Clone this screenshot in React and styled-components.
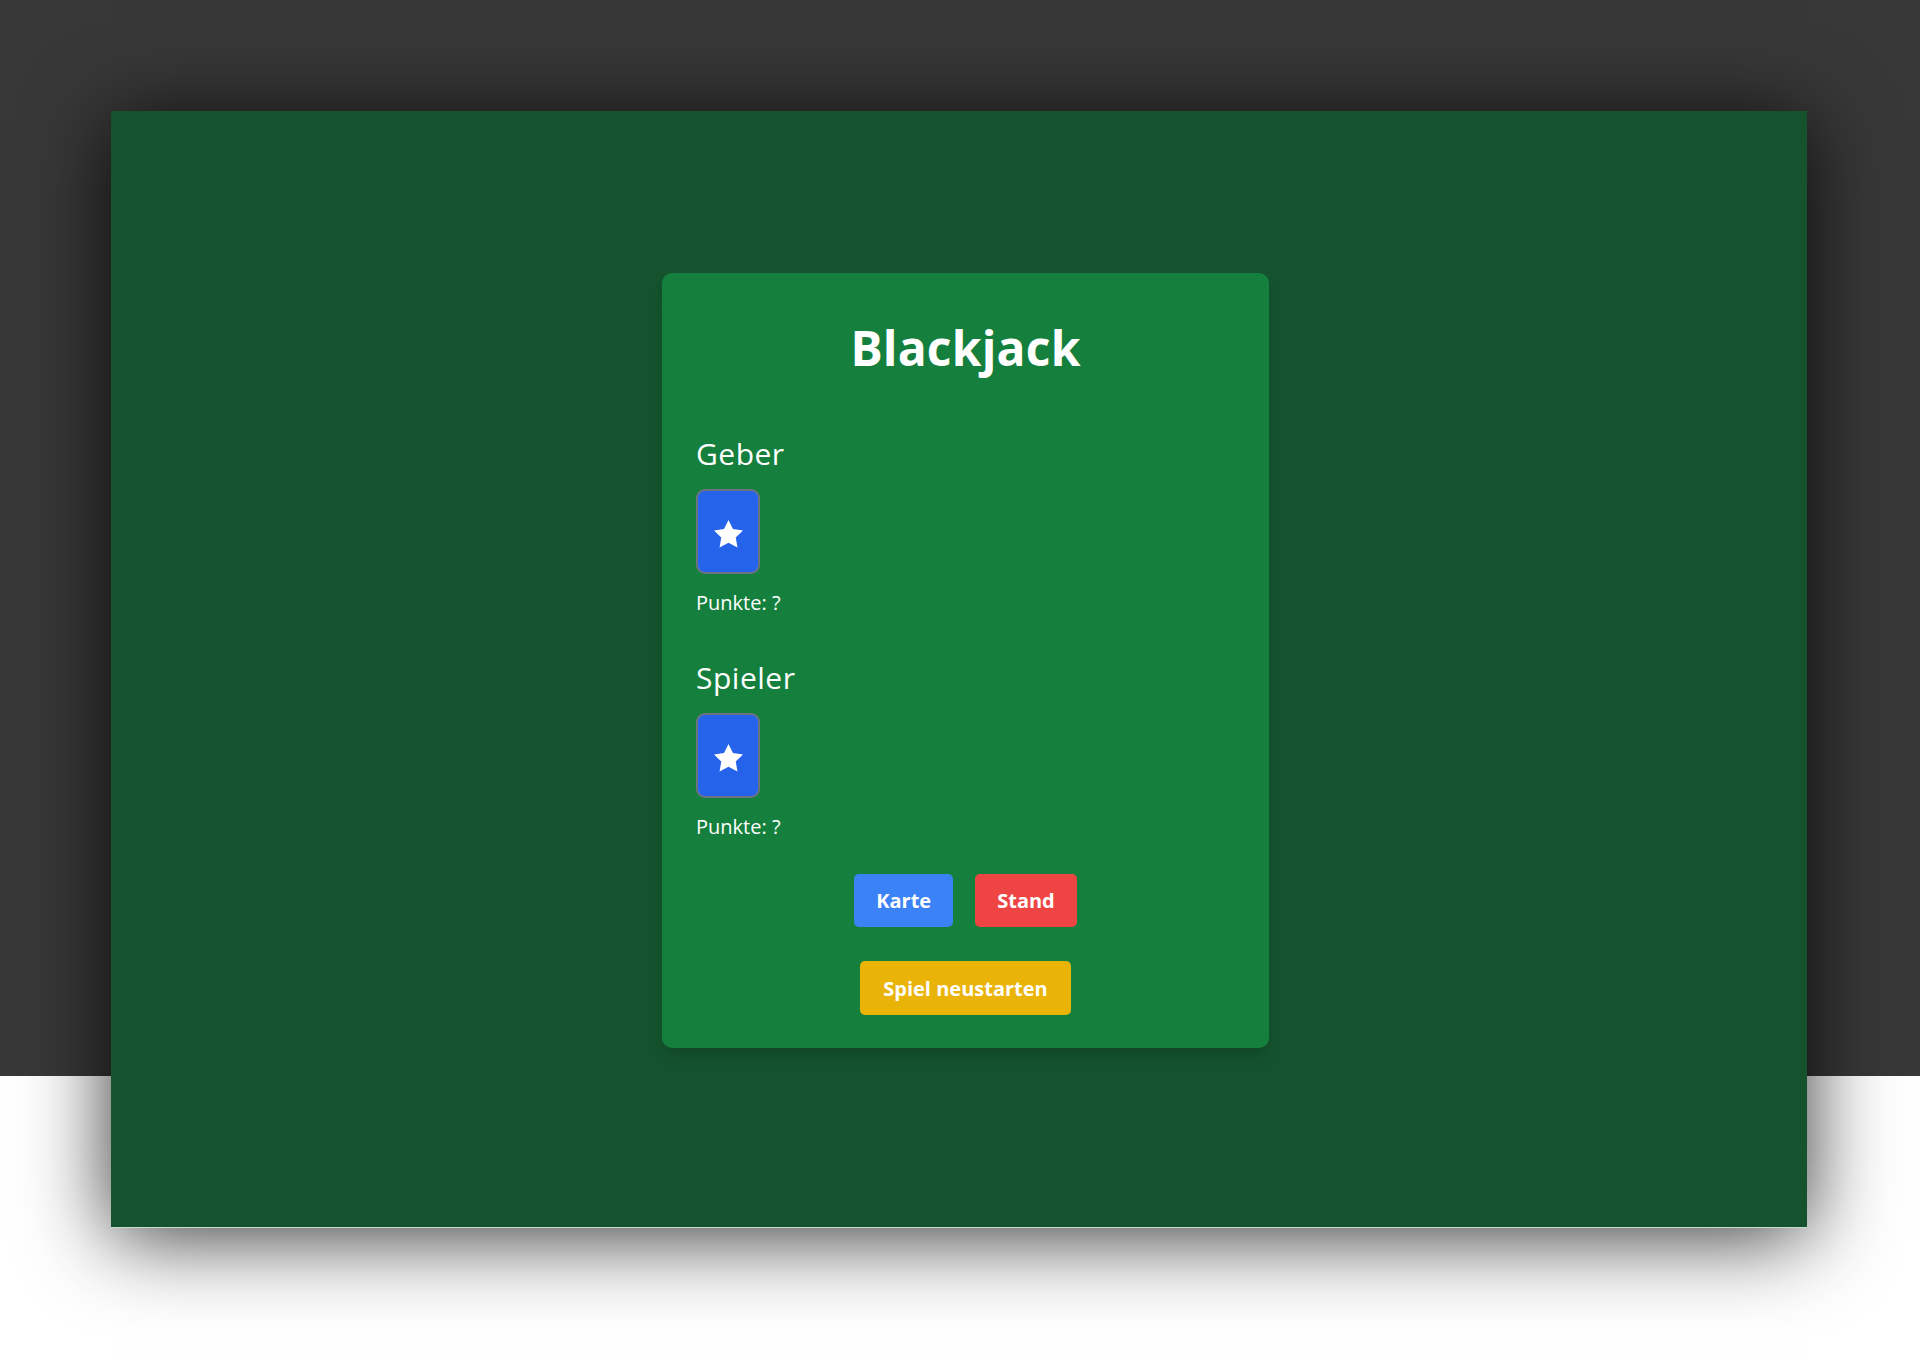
import React from "react";
import styled, { createGlobalStyle } from "styled-components";

const GlobalStyle = createGlobalStyle`
    html, body {
        margin: 0;
        padding: 0;
        background: #ffffff;
    }
    body {
        font-family: "Open Sans", "Noto Sans", "Liberation Sans", sans-serif;
    }
`;

/* dark top area, white below it */
const Stage = styled.div`
    min-height: 1372px;
    box-sizing: border-box;
    padding: 111px 0 0 111px;
    background: linear-gradient(to bottom, #383838 0, #383838 1076px, #ffffff 1076px);
`;

const Table = styled.main`
    width: 1696px;
    height: 1117px;
    box-sizing: border-box;
    display: flex;
    justify-content: center;
    align-items: flex-start;
    padding: 162px 0 0 13px;
    background-color: #14532d;
    border-bottom: 1px solid #c9dbd0;
    box-shadow: 0 8px 80px rgba(0, 0, 0, 0.8);
`;

const Board = styled.section`
    width: 607px;
    box-sizing: border-box;
    padding: 33px 34px;
    background-color: #15803d;
    border-radius: 10px;
    color: #ffffff;
    box-shadow: 0 12px 19px -4px rgba(0, 0, 0, 0.12), 0 5px 8px -5px rgba(0, 0, 0, 0.12);
`;

const Title = styled.h1`
    margin: 14px 0 58px;
    font-size: 48px;
    line-height: 56px;
    font-weight: 700;
    letter-spacing: 0.2px;
    text-align: center;
`;

const Hand = styled.div`
    display: flex;
    flex-direction: column;
    align-items: flex-start;
    margin-bottom: ${(p) => p.$gap || 0}px;
`;

const HandTitle = styled.h2`
    margin: 0 0 15px;
    font-size: 30px;
    line-height: 40px;
    font-weight: 400;
    letter-spacing: 0.5px;
`;

const Cards = styled.div`
    display: flex;
    gap: 10px;
`;

const HiddenCard = styled.div`
    width: 64px;
    height: 85px;
    box-sizing: border-box;
    display: flex;
    align-items: center;
    justify-content: center;
    padding-top: 5px;
    background-color: #2563eb;
    border: 2px solid #6b7280;
    border-radius: 9px;
`;

const Score = styled.p`
    margin: 15px 0 0;
    font-size: 20px;
    line-height: 28px;
`;

const ButtonRow = styled.div`
    display: flex;
    justify-content: center;
    gap: 22px;
    margin-top: ${(p) => p.$top}px;
`;

const Button = styled.button`
    height: ${(p) => p.$height || 53}px;
    padding: 0 ${(p) => p.$pad || 22}px;
    border: none;
    border-radius: 5px;
    background-color: ${(p) => p.$color};
    color: #ffffff;
    font-family: inherit;
    font-size: 20px;
    font-weight: 700;
    cursor: pointer;
`;

const Star = () => (
    <svg width="29" height="27.6" viewBox="2 2 20 19.02" aria-hidden="true">
        <polygon
            fill="#ffffff"
            points="12,2 15.09,8.26 22,9.27 17,14.14 18.18,21.02 12,17.77 5.82,21.02 7,14.14 2,9.27 8.91,8.26"
        />
    </svg>
);

const PlayerHand = ({ name, gap }) => (
    <Hand $gap={gap}>
        <HandTitle>{name}</HandTitle>
        <Cards>
            <HiddenCard>
                <Star />
            </HiddenCard>
        </Cards>
        <Score>Punkte: ?</Score>
    </Hand>
);

const App = () => {
    return (
        <>
            <GlobalStyle />
            <Stage>
                <Table>
                    <Board>
                        <Title>Blackjack</Title>
                        <PlayerHand name="Geber" gap={41} />
                        <PlayerHand name="Spieler" />
                        <ButtonRow $top={33}>
                            <Button $color="#3b82f6">Karte</Button>
                            <Button $color="#ef4444">Stand</Button>
                        </ButtonRow>
                        <ButtonRow $top={34}>
                            <Button $color="#eab308" $height={54} $pad={23}>
                                Spiel neustarten
                            </Button>
                        </ButtonRow>
                    </Board>
                </Table>
            </Stage>
        </>
    );
};

export default App;
